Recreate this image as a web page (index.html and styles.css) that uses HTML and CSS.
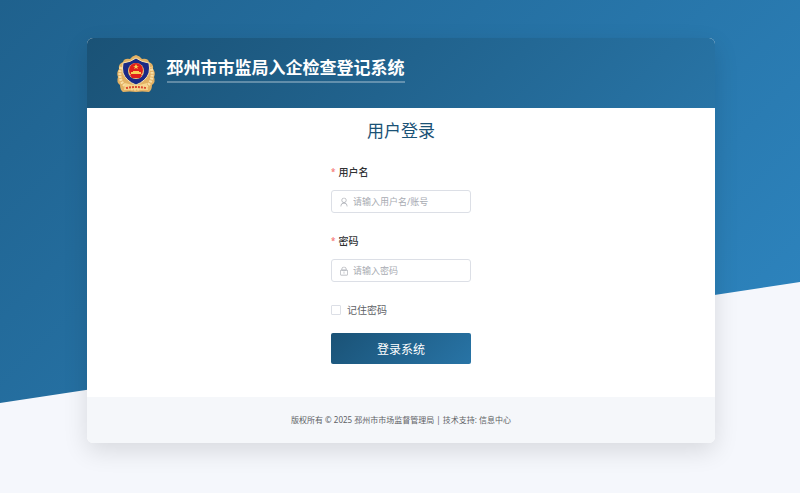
FILE: index.html
```html
<!DOCTYPE html>
<html lang="zh-CN">
<head>
  <meta charset="UTF-8">
  <meta name="viewport" content="width=device-width, initial-scale=1.0">
  <title>邳州市市监局入企检查登记系统</title>
  <link rel="stylesheet" href="styles.css">
</head>
<body>
  <div class="login-container">
    <div class="login-box">
      <header class="login-header">
        <svg class="logo" viewBox="0 0 40 40" aria-hidden="true">
          <path fill="#e3b163" d="M20 1Q24 2 26 5Q32 4 33 8Q38 10 37 15Q40 19 38 23Q40 28 36 31Q36 36 33 38Q26 37 20 38Q14 37 7 38Q4 36 4 31Q0 28 2 23Q0 19 3 15Q2 10 7 8Q8 4 14 5Q16 2 20 1z"/>
          <path fill="none" stroke="#f9dfa6" stroke-width="3" stroke-dasharray="2 1" d="M5 13Q2 23 7 30Q12 35 20 35Q28 35 33 30Q38 23 35 13"/>
          <path fill="#1b2a86" stroke="#f9e3ae" stroke-width="1" d="M20 4Q25 8 33 9Q34 14 33 19Q30 27 20 31Q10 27 7 19Q6 14 7 9Q15 8 20 4z"/>
          <circle cx="20" cy="17" r="8" fill="#f0c878"/>
          <circle cx="20" cy="16" r="7" fill="#de1f1b"/>
          <path fill="#f9cf55" d="M20 10l1 2h2l-2 1 1 2-2-1-2 1 1-2-2-1h2zM17 17h6v1h2v2H15v-2h2z"/>
          <path fill="#de1f1b" d="M14 21h12l-2 3h-8z"/>
          <path fill="#f7d58e" d="M9 29Q20 33 31 29L32 36Q20 35 8 36z"/>
          <path fill="none" stroke="#dc4a30" stroke-width="2" stroke-dasharray="2 1" d="M10 34Q20 32 30 34"/>
        </svg>
        <h1 class="system-title">邳州市市监局入企检查登记系统</h1>
      </header>

      <main class="login-main">
        <h2 class="login-title">用户登录</h2>
        <form class="login-form">
          <div class="form-item">
            <label class="form-label" for="username">用户名</label>
            <div class="input-wrapper">
              <svg class="input-icon" viewBox="0 0 1024 1024" aria-hidden="true">
                <path fill="currentColor" d="M512 512a192 192 0 1 0 0-384 192 192 0 0 0 0 384m0 64a256 256 0 1 1 0-512 256 256 0 0 1 0 512M160 940c0-210 130-350 352-350s352 140 352 350a36 36 0 0 1-72 0c0-170-100-280-280-280S232 770 232 940a36 36 0 0 1-72 0"/>
              </svg>
              <input class="input-inner" type="text" id="username" placeholder="请输入用户名/账号">
            </div>
          </div>
          <div class="form-item">
            <label class="form-label" for="password">密码</label>
            <div class="input-wrapper">
              <svg class="input-icon" viewBox="0 0 1024 1024" aria-hidden="true">
                <path fill="currentColor" d="M224 448a32 32 0 0 0-32 32v384a32 32 0 0 0 32 32h576a32 32 0 0 0 32-32V480a32 32 0 0 0-32-32zm0-64h576a96 96 0 0 1 96 96v384a96 96 0 0 1-96 96H224a96 96 0 0 1-96-96V480a96 96 0 0 1 96-96"/>
                <path fill="currentColor" d="M512 544a32 32 0 0 1 32 32v192a32 32 0 1 1-64 0V576a32 32 0 0 1 32-32m192-160v-64a192 192 0 1 0-384 0v64zM512 64a256 256 0 0 1 256 256v128H256V320A256 256 0 0 1 512 64"/>
              </svg>
              <input class="input-inner" type="password" id="password" placeholder="请输入密码">
            </div>
          </div>
          <label class="remember">
            <input class="remember-check" type="checkbox">
            <span>记住密码</span>
          </label>
          <button class="login-button" type="submit">登录系统</button>
        </form>
      </main>

      <footer class="login-footer">版权所有 © 2025 邳州市市场监督管理局 | 技术支持: 信息中心</footer>
    </div>
  </div>
</body>
</html>
```
FILE: styles.css
```css
* {
  box-sizing: border-box;
}
body {
  margin: 0;
  font-family: "Noto Sans", "Noto Sans CJK SC", sans-serif;
  color: #606266;
  background: #f5f7fa;
}
.login-container {
  position: relative;
  min-height: 100vh;
  padding: 38px 0 48px 2px;
  background: #f5f7fc;
}
/* slanted blue background */
.login-container::before {
  content: "";
  position: absolute;
  top: 0;
  left: 0;
  width: 100%;
  height: 403px;
  background: linear-gradient(135deg, #1f618d, #2e86c1);
  clip-path: polygon(0 0, 100% 0, 100% 70%, 0 100%);
}
.login-box {
  position: relative;
  width: 78.8%;
  margin: 0 auto;
  background: #fff;
  border-radius: 6px;
  box-shadow: 0 8px 24px rgba(0, 0, 0, 0.12);
  overflow: hidden;
}
.login-header {
  display: flex;
  align-items: flex-start;
  gap: 11px;
  padding: 16px 29px 14px;
  background: linear-gradient(135deg, #1a5276, #2874a6);
}
.logo {
  width: 40px;
  height: 40px;
}
.system-title {
  margin: 0;
  padding: 2px 0 1px;
  border-bottom: 2px solid rgba(255, 255, 255, 0.3);
  font-size: 17px;
  line-height: 24px;
  color: #fff;
}
.login-main {
  padding: 11px 20px 33px;
}
.login-title {
  margin: 0 0 21px;
  font-size: 17px;
  font-weight: 400;
  line-height: 24px;
  text-align: center;
  color: #1a5276;
}
.login-form {
  width: 140px;
  margin: 0 auto;
}
.form-item {
  margin-bottom: 20px;
}
.form-label {
  display: flex;
  gap: 3px;
  margin-bottom: 10px;
  font-size: 10px;
  font-weight: 500;
  line-height: 16px;
  color: #303133;
}
.form-label::before {
  content: "*";
  font-size: 8px;
  color: #f56c6c;
}
.input-wrapper {
  display: flex;
  align-items: center;
  gap: 4px;
  height: 23px;
  padding: 0 7px;
  border: 1px solid #dcdfe6;
  border-radius: 3px;
  background: #fff;
}
.input-icon {
  flex: none;
  width: 10px;
  height: 10px;
  color: #a8abb2;
}
.input-inner {
  flex: 1;
  min-width: 0;
  padding: 0;
  border: 0;
  outline: none;
  background: none;
  font-family: inherit;
  font-size: 9px;
  color: #606266;
}
.input-inner::placeholder {
  color: #a8abb2;
}
.remember {
  display: flex;
  align-items: center;
  gap: 6px;
  margin-bottom: 15px;
  font-size: 10px;
  line-height: 16px;
}
.remember-check {
  appearance: none;
  width: 10px;
  height: 10px;
  margin: 0;
  border: 1px solid #dcdfe6;
  border-radius: 1px;
  background: #fff;
}
.remember-check:checked {
  background: #2874a6;
}
.login-button {
  display: block;
  width: 100%;
  height: 31px;
  padding: 0;
  border: 0;
  border-radius: 2px;
  background: linear-gradient(135deg, #1a5276, #2874a6);
  font-family: inherit;
  font-size: 12px;
  color: #fff;
  cursor: pointer;
}
.login-footer {
  padding: 15px;
  background: #f5f7fa;
  font-size: 8px;
  line-height: 16px;
  text-align: center;
}
```
